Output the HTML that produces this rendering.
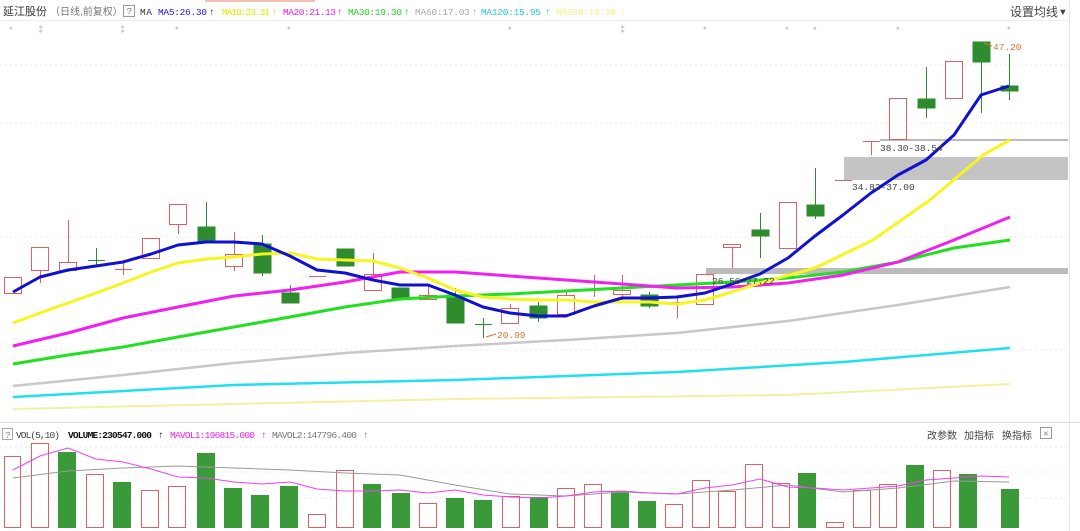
<!DOCTYPE html>
<html><head><meta charset="utf-8"><style>
body{margin:0;width:1080px;height:531px;overflow:hidden;background:#fff;font-family:"Liberation Sans","Noto Sans CJK SC",sans-serif}
svg{position:absolute;left:0;top:0}
text{font-family:"Liberation Mono","Noto Sans CJK SC",monospace;font-size:9.5px}
.cn{font-family:"Liberation Sans","Noto Sans CJK SC",sans-serif;font-size:11px}
</style></head><body>
<svg width="1080" height="531" viewBox="0 0 1080 531">
<rect x="205" y="0" width="110" height="2" fill="#f0c0b0"/>
<line x1="0" y1="20.5" x2="1068" y2="20.5" stroke="#eee"/>
<line x1="1069.5" y1="0" x2="1069.5" y2="531" stroke="#e6e6e6"/>
<line x1="0" y1="422.5" x2="1080" y2="422.5" stroke="#ddd"/>
<g stroke="#e8e8e8" stroke-dasharray="2,3">
<line x1="0" y1="65" x2="1068" y2="65"/><line x1="0" y1="123" x2="1068" y2="123"/><line x1="0" y1="237" x2="1068" y2="237"/><line x1="0" y1="350" x2="1068" y2="350"/>
<line x1="0" y1="447" x2="1068" y2="447"/><line x1="0" y1="472" x2="1068" y2="472"/><line x1="0" y1="498" x2="1068" y2="498"/>
</g>
<text class="cn" x="3" y="15" fill="#333" style="font-size:11px">延江股份</text>
<text class="cn" x="50" y="15" fill="#777" style="font-size:10px">（日线,前复权）</text>
<rect x="123.5" y="5.5" width="11" height="11" fill="none" stroke="#999"/>
<text x="126.5" y="14" fill="#777">?</text>
<text x="140" y="15" fill="#333" textLength="12">MA</text>
<text x="158" y="15" fill="#1a1ad0" textLength="49">MA5:26.30</text><text x="209" y="15" fill="#1a1ad0">↑</text>
<text x="222" y="15" fill="#e6e600" textLength="48">MA10:23.31</text><text x="272" y="15" fill="#e6e600">↑</text>
<text x="283" y="15" fill="#e020e0" textLength="53">MA20:21.13</text><text x="337" y="15" fill="#e020e0">↑</text>
<text x="348" y="15" fill="#20d020" textLength="54">MA30:19.30</text><text x="404" y="15" fill="#20d020">↑</text>
<text x="415" y="15" fill="#aaa" textLength="55">MA60:17.03</text><text x="472" y="15" fill="#aaa">↑</text>
<text x="481" y="15" fill="#20c8e0" textLength="60">MA120:15.95</text><text x="545" y="15" fill="#20c8e0">↑</text>
<text x="556" y="15" fill="#f0f080" textLength="60">MA250:14.38</text><text x="620" y="15" fill="#f0f080">↑</text>
<text class="cn" x="1010" y="16" fill="#444" style="font-size:12px">设置均线</text><text x="1060" y="15" fill="#444" font-size="6">▼</text>
<g fill="#aaa" font-size="11">
<text x="8" y="33">*</text><text x="36" y="33">⁑</text><text x="118" y="33">⁑</text><text x="174" y="33">*</text><text x="286" y="33">*</text><text x="507" y="33">*</text><text x="618" y="33">⁑</text><text x="702" y="33">*</text><text x="784" y="33">*</text><text x="812" y="33">*</text><text x="895" y="33">*</text><text x="1006" y="33">*</text>
</g>
<rect x="844" y="157" width="224" height="23" fill="#c4c4c4"/>
<line x1="880" y1="140" x2="1068" y2="140" stroke="#bbb" stroke-width="2"/>
<rect x="706" y="268" width="362" height="6" fill="#bbb"/>
<g stroke="#e06060" fill="#fff" stroke-width="1">
<rect x="4.5" y="277.5" width="17" height="16"/>
<line x1="40.5" y1="270" x2="40.5" y2="283"/><rect x="31.5" y="247.5" width="17" height="23"/>
<line x1="68.5" y1="220" x2="68.5" y2="272"/><rect x="59.5" y="262.5" width="17" height="8"/>
<line x1="123.5" y1="261" x2="123.5" y2="275"/><line x1="115" y1="269.5" x2="132" y2="269.5"/>
<rect x="142.5" y="238.5" width="17" height="20"/>
<line x1="178.5" y1="224" x2="178.5" y2="234"/><rect x="169.5" y="204.5" width="17" height="20"/>
<line x1="234.5" y1="232" x2="234.5" y2="271"/><rect x="225.5" y="254.5" width="17" height="12"/>
<line x1="309" y1="276.5" x2="326" y2="276.5"/>
<line x1="373.5" y1="253" x2="373.5" y2="274"/><rect x="364.5" y="274.5" width="17" height="16"/>
<line x1="428.5" y1="285" x2="428.5" y2="295"/><rect x="419.5" y="295.5" width="17" height="4"/>
<line x1="510.5" y1="304" x2="510.5" y2="308"/><rect x="501.5" y="308.5" width="17" height="15"/>
<line x1="566.5" y1="292" x2="566.5" y2="296"/><rect x="557.5" y="295.5" width="17" height="19"/>
<line x1="594.5" y1="275" x2="594.5" y2="297"/><line x1="586" y1="282.5" x2="603" y2="282.5"/>
<line x1="622.5" y1="275" x2="622.5" y2="300"/><rect x="613.5" y="290.5" width="17" height="4"/>
<line x1="677.5" y1="295" x2="677.5" y2="318"/><line x1="669" y1="302.5" x2="686" y2="302.5"/>
<rect x="696.5" y="274.5" width="17" height="30"/>
<line x1="732.5" y1="248" x2="732.5" y2="268"/><rect x="723.5" y="244.5" width="17" height="3"/>
<rect x="779.5" y="202.5" width="17" height="46"/>
<line x1="835" y1="180.5" x2="852" y2="180.5"/>
<line x1="871.5" y1="141" x2="871.5" y2="155"/><line x1="863" y1="141.5" x2="880" y2="141.5"/>
<rect x="889.5" y="98.5" width="17" height="41"/>
<rect x="945.5" y="61.5" width="17" height="37"/>
</g>
<g stroke="#2e8b2e" fill="#2e8b2e">
<line x1="96.5" y1="248" x2="96.5" y2="267"/><line x1="88" y1="260.5" x2="105" y2="260.5"/>
<line x1="206.5" y1="202" x2="206.5" y2="241"/><rect x="198" y="227" width="17" height="14"/>
<line x1="262.5" y1="235" x2="262.5" y2="276"/><rect x="254" y="244" width="17" height="29"/>
<line x1="290.5" y1="285" x2="290.5" y2="303"/><rect x="282" y="293" width="17" height="10"/>
<rect x="337" y="249" width="17" height="17"/>
<rect x="392" y="288" width="17" height="11"/>
<line x1="455.5" y1="288" x2="455.5" y2="323"/><rect x="447" y="295" width="17" height="28"/>
<line x1="483.5" y1="318" x2="483.5" y2="338"/><line x1="475" y1="324.5" x2="492" y2="324.5"/>
<line x1="538.5" y1="302" x2="538.5" y2="322"/><rect x="530" y="306" width="17" height="12"/>
<line x1="649.5" y1="292" x2="649.5" y2="308"/><rect x="641" y="295" width="17" height="11"/>
<line x1="760.5" y1="213" x2="760.5" y2="258"/><rect x="752" y="230" width="17" height="6"/>
<line x1="815.5" y1="168" x2="815.5" y2="219"/><rect x="807" y="205" width="17" height="11"/>
<line x1="926.5" y1="67" x2="926.5" y2="118"/><rect x="918" y="99" width="17" height="9"/>
<line x1="981.5" y1="42" x2="981.5" y2="113"/><rect x="973" y="42" width="17" height="20"/>
<line x1="1009.5" y1="54" x2="1009.5" y2="100"/><rect x="1001" y="86" width="17" height="5"/>
</g>
<g fill="none" stroke-linejoin="round">
<polyline stroke="#f3f0a0" stroke-width="2" points="13,409 455,399 788,395 1010,384"/>
<polyline stroke="#20e0f0" stroke-width="2.5" points="13,397 234,385 455,380 677,372 843,362 1010,348"/>
<polyline stroke="#c8c8c8" stroke-width="2.5" points="13,386 123,375 234,363 345,353 455,346 566,340 677,333 788,321 898,305 1010,287"/>
<polyline stroke="#20e020" stroke-width="3" points="13,364 68,355 123,347 178,337 234,327 290,317 345,307 400,299 455,296 510,294 566,291 622,288 677,285 733,282 788,278 843,272 898,262 954,248 1010,240"/>
<polyline stroke="#f020f0" stroke-width="3" points="13,346 68,333 123,318 178,307 234,296 290,290 345,282 400,272 455,272 510,276 566,280 622,284 677,288 733,287 788,283 843,275 898,262 954,240 1010,217"/>
<polyline stroke="#f5f520" stroke-width="3" points="13,323 40,313 68,303 96,293 123,283 151,272 178,263 206,259 234,257 262,254 290,253 317,259 345,260 373,261 400,268 428,278 455,290 483,297 510,299 538,300 566,300 594,302 622,302 649,302 677,304 705,300 732,292 760,283 815,268 873,240 930,200 983,155 1010,140"/>
<polyline stroke="#1010d0" stroke-width="3" points="13,292 40,277 68,270 96,266 123,262 151,254 178,245 206,242 234,242 262,244 290,256 317,270 345,273 373,280 400,285 428,285 455,295 483,307 510,313 538,316 566,316 594,306 622,298 649,298 677,297 705,293 732,284 760,274 788,258 815,236 843,215 871,193 898,175 926,160 954,135 981,95 1009,86"/>
</g>
<text x="852" y="190" fill="#444" font-size="10.5">34.82-37.00</text>
<text x="880" y="151" fill="#444" font-size="10.5">38.30-38.54</text>
<text x="712" y="284" fill="#444" font-size="10.5">26.50-27.22</text>
<text x="497" y="338" fill="#e07030" font-size="10.5">20.99</text>
<line x1="486" y1="337" x2="496" y2="334" stroke="#e07030"/>
<text x="993" y="50" fill="#e07030" font-size="10.5">47.20</text>
<line x1="984" y1="43" x2="992" y2="46" stroke="#e07030"/>
<rect x="2.5" y="428.5" width="10" height="11" fill="none" stroke="#aaa"/>
<text x="5" y="438" fill="#888" font-size="9">?</text>
<text x="16" y="438" fill="#444" textLength="44">VOL(5,10)</text>
<text x="68" y="438" fill="#111" font-weight="bold" textLength="84">VOLUME:230547.000</text><text x="158" y="438" fill="#111">↑</text>
<text x="170" y="438" fill="#f020f0" textLength="85">MAVOL1:196815.000</text><text x="261" y="438" fill="#f020f0">↑</text>
<text x="272" y="438" fill="#777" textLength="85">MAVOL2:147796.400</text><text x="363" y="438" fill="#777">↑</text>
<text class="cn" x="927" y="439" fill="#444" style="font-size:10px">改参数</text>
<text class="cn" x="964" y="439" fill="#444" style="font-size:10px">加指标</text>
<text class="cn" x="1002" y="439" fill="#444" style="font-size:10px">换指标</text>
<rect x="1040.5" y="427.5" width="11" height="11" fill="none" stroke="#999"/>
<text x="1043" y="436.5" fill="#888" font-size="10">×</text>
<g stroke="#e06060" fill="#fff">
<rect x="4.5" y="456.5" width="16" height="71"/><rect x="31.5" y="443.5" width="17" height="84"/>
<rect x="86.5" y="474.5" width="17" height="53"/><rect x="141.5" y="490.5" width="17" height="37"/><rect x="168.5" y="486.5" width="17" height="41"/>
<rect x="308.5" y="514.5" width="17" height="13"/><rect x="336.5" y="470.5" width="17" height="57"/>
<rect x="419.5" y="503.5" width="17" height="24"/><rect x="502.5" y="496.5" width="17" height="31"/>
<rect x="557.5" y="488.5" width="17" height="39"/><rect x="584.5" y="484.5" width="17" height="43"/>
<rect x="665.5" y="504.5" width="17" height="23"/><rect x="692.5" y="480.5" width="17" height="47"/>
<rect x="718.5" y="491.5" width="17" height="36"/><rect x="745.5" y="464.5" width="17" height="63"/>
<rect x="772.5" y="483.5" width="17" height="44"/><rect x="826.5" y="522.5" width="17" height="5"/>
<rect x="853.5" y="490.5" width="17" height="37"/><rect x="879.5" y="484.5" width="17" height="43"/>
<rect x="933.5" y="470.5" width="17" height="57"/>
</g>
<g fill="#3a9a3a">
<rect x="58" y="452" width="18" height="76"/><rect x="113" y="482" width="18" height="46"/>
<rect x="197" y="453" width="18" height="75"/><rect x="224" y="488" width="18" height="40"/><rect x="251" y="495" width="18" height="33"/><rect x="280" y="486" width="18" height="42"/>
<rect x="363" y="484" width="18" height="44"/><rect x="392" y="493" width="18" height="35"/>
<rect x="446" y="498" width="18" height="30"/><rect x="474" y="500" width="18" height="28"/>
<rect x="530" y="497" width="18" height="31"/>
<rect x="611" y="491" width="18" height="37"/><rect x="638" y="501" width="18" height="27"/>
<rect x="798" y="473" width="18" height="55"/>
<rect x="906" y="465" width="18" height="63"/><rect x="959" y="474" width="18" height="54"/><rect x="1001" y="489" width="18" height="39"/>
</g>
<g fill="none" stroke-width="1">
<polyline stroke="#999" points="13,478 68,471 123,468 178,466 234,468 290,470 345,473 400,475 455,485 510,494 566,496 622,492 677,494 733,490 788,485 843,492 898,488 954,481 1009,482"/>
<polyline stroke="#f040f0" points="13,470 40,456 68,448 96,459 123,462 151,469 178,477 206,478 234,482 262,484 290,482 317,489 345,491 373,491 400,490 428,493 455,490 483,495 510,497 538,498 566,496 594,492 622,491 649,493 677,494 705,488 732,485 760,479 788,487 815,488 843,490 871,488 898,486 926,480 954,478 981,476 1009,477"/>
</g>
</svg>
</body></html>
